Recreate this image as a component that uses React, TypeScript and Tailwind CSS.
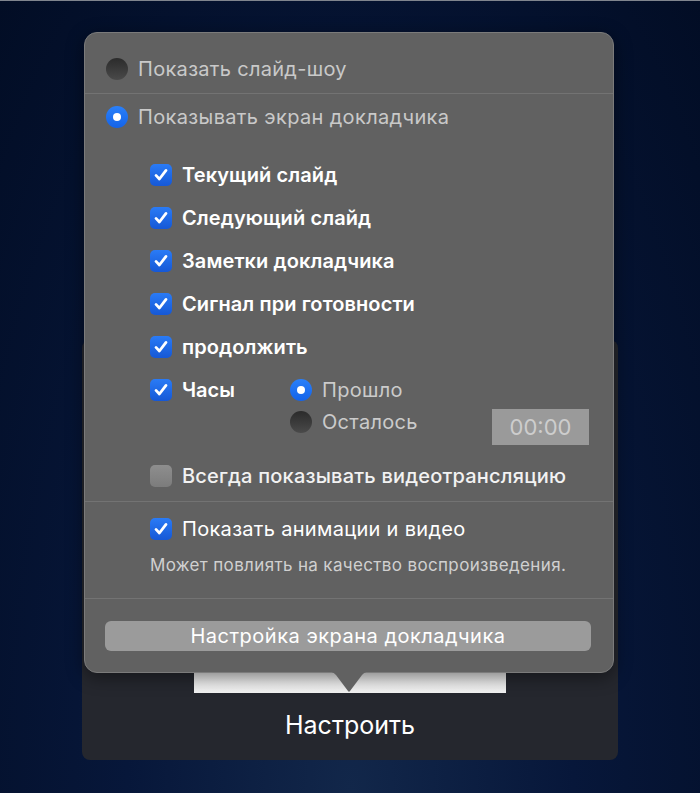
import React from "react";

const font = { fontFamily: "Inter, 'Noto Sans', sans-serif" };

function Check({ on = true }: { on?: boolean }) {
	if (!on) {
		return (
			<span className="w-[22px] h-[22px] rounded-[5px] bg-gradient-to-b from-[#8e8e8e] to-[#7c7c7c] shrink-0" />
		);
	}
	return (
		<span className="w-[22px] h-[22px] rounded-[5px] bg-gradient-to-b from-[#2a7bf6] to-[#1658d6] shrink-0 flex items-center justify-center">
			<svg width="16" height="16" viewBox="0 0 16 16" fill="none">
				<path
					d="M3 8.4 L6.4 12 L13 3.4"
					stroke="white"
					strokeWidth="2.8"
					strokeLinecap="round"
					strokeLinejoin="round"
				/>
			</svg>
		</span>
	);
}

function Radio({ on }: { on: boolean }) {
	if (on) {
		return (
			<span className="w-[22px] h-[22px] rounded-full bg-gradient-to-b from-[#2a80fa] to-[#1463e8] shrink-0 flex items-center justify-center">
				<span className="w-[8px] h-[8px] rounded-full bg-white" />
			</span>
		);
	}
	return (
		<span className="w-[22px] h-[22px] rounded-full bg-gradient-to-b from-[#2b2b2b] to-[#4a4a4a] shrink-0" />
	);
}

function CheckRow({ label }: { label: string }) {
	return (
		<div className="h-[43px] flex items-center pl-[65px] gap-[10px]">
			<Check />
			<span className="text-[20px] font-semibold text-white tracking-[0.1px]">{label}</span>
		</div>
	);
}

export default function App() {
	return (
		<div
			className="relative w-[700px] h-[793px] overflow-hidden border-t border-[#80858e] bg-[radial-gradient(ellipse_at_50%_100%,#12274a_0%,#07173a_45%,#020d25_100%)]"
			style={font}
		>
			{/* keynote panel behind the popover */}
			<div className="ml-[82px] mt-[339px] w-[536px] h-[420px] rounded-[8px] bg-[#25272e] flex flex-col items-center justify-end">
				<div className="w-[312px] h-[20px] bg-gradient-to-b from-[#e4e4e4] to-[#f2f2f2]" />
				<div className="h-[67px] flex items-center text-white text-[25px] pb-[2px]">Настроить</div>
			</div>

			{/* popover */}
			<div className="absolute left-[84px] top-[31px] w-[530px]">
				<div className="relative rounded-[13px] bg-[#616161] border border-[#7b7b7b] shadow-[0_4px_18px_rgba(0,0,0,0.45)]">
					<div className="h-[60px] pt-[12px] flex items-center pl-[21px] gap-[10px]">
						<Radio on={false} />
						<span className="text-[20px] text-[#c9c9c9] tracking-[0.3px]">Показать слайд-шоу</span>
					</div>
					<div className="h-px bg-[#737373]" />
					<div className="h-[46px] flex items-center pl-[21px] gap-[10px]">
						<Radio on />
						<span className="text-[20px] text-[#c9c9c9] tracking-[0.35px]">Показывать экран докладчика</span>
					</div>

					<div className="pt-[13px]">
						<CheckRow label="Текущий слайд" />
						<CheckRow label="Следующий слайд" />
						<CheckRow label="Заметки докладчика" />
						<CheckRow label="Сигнал при готовности" />
						<CheckRow label="продолжить" />
					</div>

					{/* clock block */}
					<div className="flex h-[77px] pl-[65px] pr-[24px]">
						<div className="h-[44px] flex items-center gap-[10px] w-[140px]">
							<Check />
							<span className="text-[20px] font-semibold text-white">Часы</span>
						</div>
						<div className="flex flex-col pt-[6px]">
							<div className="h-[32px] flex items-center gap-[10px]">
								<Radio on />
								<span className="text-[20px] text-[#cbcbcb] tracking-[0.3px]">Прошло</span>
							</div>
							<div className="h-[32px] flex items-center gap-[10px]">
								<Radio on={false} />
								<span className="text-[20px] text-[#cbcbcb] tracking-[0.3px]">Осталось</span>
							</div>
						</div>
						<div className="ml-auto self-end w-[97px] h-[36px] bg-[#9a9a9a] flex items-center justify-center text-[22px] text-[#cdcdcd]">
							00:00
						</div>
					</div>

					<div className="h-[56px] pt-[6px] flex items-center pl-[65px] gap-[10px]">
						<Check on={false} />
						<span className="text-[20px] font-medium text-[#f2f2f2] tracking-[0.2px]">
							Всегда показывать видеотрансляцию
						</span>
					</div>
					<div className="h-px bg-[#737373]" />

					<div className="pt-[16px] pb-[23px] pl-[65px]">
						<div className="h-[22px] flex items-center gap-[10px]">
							<Check />
							<span className="text-[20px] text-white tracking-[0.3px]">Показать анимации и видео</span>
						</div>
						<div className="mt-[15px] text-[17px] leading-[20px] text-[#d0d0d0] tracking-[0.35px]">
							Может повлиять на качество воспроизведения.
						</div>
					</div>
					<div className="h-px bg-[#737373]" />

					<div className="pt-[22px] pb-[21px] pl-[20px] pr-[22px]">
						<div className="h-[30px] rounded-[6px] bg-[#9b9b9b] flex items-center justify-center text-[20px] text-white tracking-[0.5px]">
							Настройка экрана докладчика
						</div>
					</div>
				</div>
				{/* arrow */}
				<svg
					className="absolute left-[241px] top-[100%] -mt-[2px]"
					width="48"
					height="22"
					viewBox="0 0 48 22"
				>
					<path
						d="M0 0 L48 0 C42 0 40 1 37 4 L25 20 Q24 21.5 23 20 L11 4 C8 1 6 0 0 0 Z"
						fill="#616161"
					/>
				</svg>
			</div>
		</div>
	);
}
